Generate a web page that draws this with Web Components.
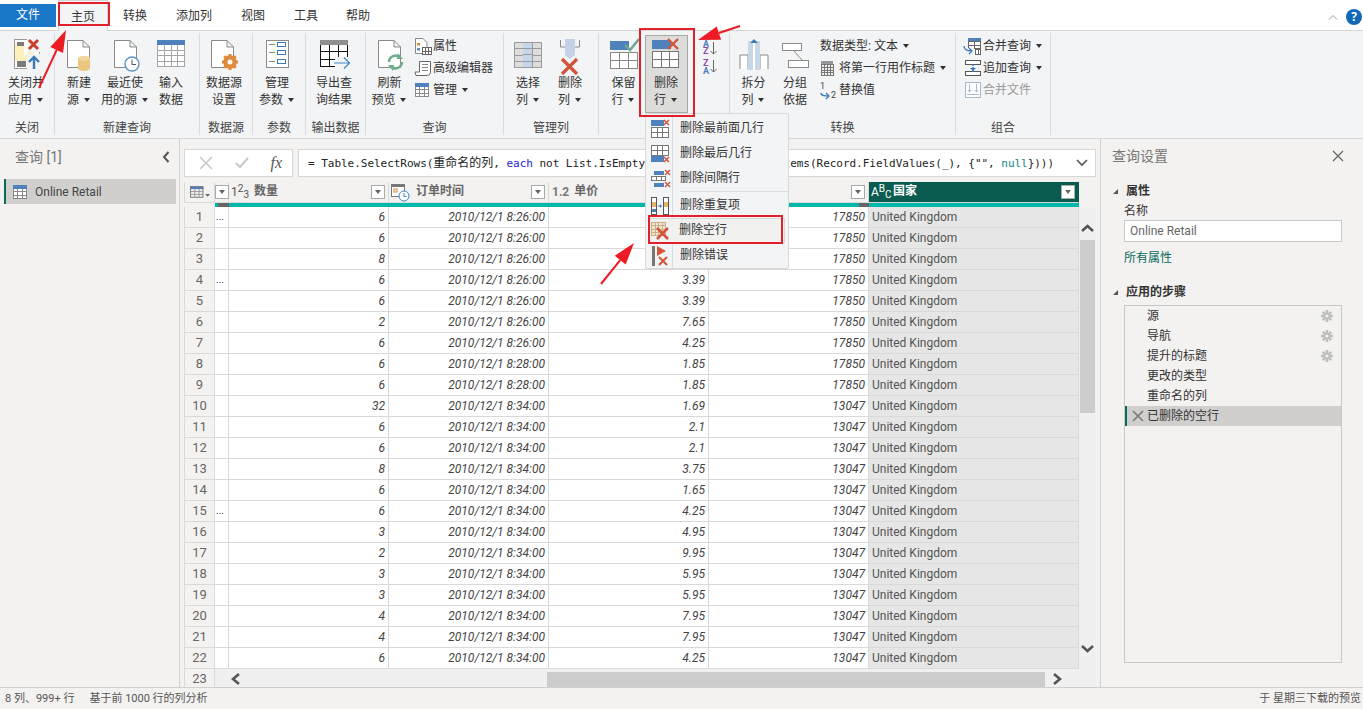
<!DOCTYPE html>
<html lang="zh-CN">
<head>
<meta charset="UTF-8">
<title>Power Query</title>
<style>
    html,body{margin:0;height:100%;overflow:hidden;}
    body{
        width:1363px;height:709px;position:relative;display:flex;flex-direction:column;
        font:12px/17px Roboto,"Noto Sans CJK SC",sans-serif;color:#333;background:#f3f2f1;
    }
</style>
</head>
<body>
<pq-tabs></pq-tabs>
<pq-ribbon>
    <rb-group label="关闭" w="55">
        <rb-btn icon="close" w="52">关闭并<br>应用 <pq-caret></pq-caret></rb-btn>
    </rb-group>
    <rb-group label="新建查询" w="145" pad="3">
        <rb-btn icon="newsrc" w="42">新建<br>源 <pq-caret></pq-caret></rb-btn>
        <rb-btn icon="recent" w="50">最近使<br>用的源 <pq-caret></pq-caret></rb-btn>
        <rb-btn icon="input" w="42">输入<br>数据</rb-btn>
    </rb-group>
    <rb-group label="数据源" w="53">
        <rb-btn icon="dsset" w="48">数据源<br>设置</rb-btn>
    </rb-group>
    <rb-group label="参数" w="53">
        <rb-btn icon="param" w="48">管理<br>参数 <pq-caret></pq-caret></rb-btn>
    </rb-group>
    <rb-group label="输出数据" w="60">
        <rb-btn icon="export" w="56">导出查<br>询结果</rb-btn>
    </rb-group>
    <rb-group label="查询" w="138" pad="2">
        <rb-btn icon="refresh" w="43">刷新<br>预览 <pq-caret></pq-caret></rb-btn>
        <rb-col>
            <rb-small icon="props">属性</rb-small>
            <rb-small icon="adv">高级编辑器</rb-small>
            <rb-small icon="manage">管理 <pq-caret></pq-caret></rb-small>
        </rb-col>
    </rb-group>
    <rb-group label="管理列" w="95" pad="4">
        <rb-btn icon="selcol" w="40">选择<br>列 <pq-caret></pq-caret></rb-btn>
        <rb-btn icon="delcol" w="44">删除<br>列 <pq-caret></pq-caret></rb-btn>
    </rb-group>
    <rb-group label="减少行" w="131" pad="3">
        <rb-btn icon="keep" w="43">保留<br>行 <pq-caret></pq-caret></rb-btn>
        <rb-btn icon="delrow" w="43" active>删除<br>行 <pq-caret></pq-caret></rb-btn>
        <rb-sort></rb-sort>
    </rb-group>
    <rb-group label="转换" w="226" pad="3">
        <rb-btn icon="split" w="41">拆分<br>列 <pq-caret></pq-caret></rb-btn>
        <rb-btn icon="group" w="42">分组<br>依据</rb-btn>
        <rb-col style="margin-left:4px">
            <rb-small>数据类型: 文本 <pq-caret></pq-caret></rb-small>
            <rb-small icon="header">将第一行用作标题 <pq-caret></pq-caret></rb-small>
            <rb-small icon="replace">替换值</rb-small>
        </rb-col>
    </rb-group>
    <rb-group label="组合" w="95" pad="5">
        <rb-col>
            <rb-small icon="merge">合并查询 <pq-caret></pq-caret></rb-small>
            <rb-small icon="append">追加查询 <pq-caret></pq-caret></rb-small>
            <rb-small icon="files" dim>合并文件</rb-small>
        </rb-col>
    </rb-group>
</pq-ribbon>
<pq-main>
    <pq-queries></pq-queries>
    <pq-center>
        <pq-formula></pq-formula>
        <pq-grid></pq-grid>
    </pq-center>
    <pq-settings></pq-settings>
</pq-main>
<pq-status></pq-status>
<pq-menu></pq-menu>
<pq-annotate></pq-annotate>

<script>
    const GRID_LINE = '#d9d9d9';

    const T = (x,y,size,fill,s,extra='') => `<text x="${x}" y="${y}" font-size="${size}" fill="${fill}" font-family="Roboto" ${extra}>${s}</text>`;
    // page outline with folded corner, used by several ribbon icons
    const PAGE = (x,y,w,h) => `<path d="M${x+.5} ${y+.5}H${x+w-7}L${x+w-.5} ${y+7}V${y+h-.5}H${x+.5}Z M${x+w-7} ${y+.5}V${y+7}H${x+w-.5}" fill="#fff" stroke="#8a8a8a"/>`;
    const TABLE = (x,y,w,h,cols,rows,stroke='#8a8a8a',fill='#fff') => {
        let d = '';
        for(let i=1;i<cols;i++){ const px=Math.round(x+w*i/cols)+.5; d+=`M${px} ${y}V${y+h}`; }
        for(let i=1;i<rows;i++){ const py=Math.round(y+h*i/rows)+.5; d+=`M${x} ${py}H${x+w}`; }
        return `<rect x="${x+.5}" y="${y+.5}" width="${w}" height="${h}" fill="${fill}" stroke="${stroke}"/><path d="${d}" stroke="${stroke}" fill="none"/>`;
    };
    const X = (x,y,s,w=2.4,c='#d2553b') => `<path d="M${x} ${y}L${x+s} ${y+s}M${x+s} ${y}L${x} ${y+s}" stroke="${c}" stroke-width="${w}" fill="none"/>`;

    const ICONS = {
        close:[34,34,`<rect x="5.5" y="1.5" width="25" height="29" fill="#fff" stroke="#9a9a9a"/>
            <path d="M15 5V18L25 10V23H6V5Z" fill="#fdf0bd"/><rect x="8" y="4" width="7" height="4" fill="#7b7b7b"/><rect x="8" y="23" width="9" height="6" fill="#7b7b7b"/>
            <rect x="18" y="0" width="16" height="14" fill="#f3f4f5"/>${X(20,2,9,3,'#c8402c')}
            <rect x="18" y="16" width="16" height="16" fill="#f3f4f5"/><path d="M25 31V19M20 24L25 19L30 24" stroke="#3d7ab5" stroke-width="2.4" fill="none"/>`],
        newsrc:[32,34,`${PAGE(4,2,23,28)}<path d="M15 21c0-4 12-4 12 0V30c0 4-12 4-12 0Z" fill="#ecc57e"/><ellipse cx="21" cy="20.5" rx="6" ry="2.5" fill="#f3d79f"/>`],
        recent:[32,34,`${PAGE(5,2,23,28)}<circle cx="23" cy="26" r="7" fill="#fff" stroke="#5f93c6" stroke-width="1.4"/><path d="M23 21.5V26.5H27" stroke="#555" fill="none"/>`],
        input:[30,34,`${TABLE(1,6,27,22,4,4,'#a5a5a5')}<rect x="1" y="2" width="28" height="5" fill="#4f81bd"/>`],
        dsset:[32,34,`${PAGE(3,2,23,28)}<g transform="translate(22,24)"><circle r="5" fill="none" stroke="#e08a3c" stroke-width="3.6"/><path d="M0-8V8M-8 0H8M-5.7-5.7L5.7 5.7M-5.7 5.7L5.7-5.7" stroke="#e08a3c" stroke-width="3"/><circle r="2.5" fill="#fff"/></g>`],
        param:[30,34,`<rect x="4.5" y="2.5" width="22" height="27" fill="#fff" stroke="#8a8a8a"/>
            <path d="M7 6.5H13M7 14.5H13M7 23.5H13" stroke="#8a8a8a"/><rect x="15.5" y="4.5" width="8" height="4" fill="#fff" stroke="#3d7ab5"/><rect x="15.5" y="12.5" width="8" height="4" fill="#fff" stroke="#3d7ab5"/><rect x="15.5" y="21.5" width="8" height="4" fill="#fff" stroke="#3d7ab5"/>`],
        export:[34,34,`${TABLE(3,6,27,22,3,3,'#111')}<rect x="3" y="2" width="28" height="5" fill="#8f8f8f"/><rect x="18" y="19" width="16" height="11" fill="#f3f4f5"/><path d="M17 25H32M27 19.5L32.5 25L27 30.5" stroke="#3d87c8" stroke-width="1.2" fill="none"/>`],
        refresh:[32,34,`${PAGE(4,2,23,28)}<g fill="none" stroke="#6fad8e" stroke-width="2.6"><path d="M15 24a6.5 6.5 0 0 1 11-4.5"/><path d="M28 24a6.5 6.5 0 0 1-11 4.5"/></g><path d="M24 15L29 21H23ZM19 33L14 27H20Z" fill="#6fad8e"/>`],
        selcol:[30,34,`${TABLE(1,4,27,25,3,4,'#9a9a9a','#dddddd')}<rect x="10" y="5" width="9" height="24" fill="#c5d5ea"/><path d="M10 10.5H19M10 16.5H19M10 23.5H19" stroke="#9a9a9a"/>`],
        delcol:[26,34,`<path d="M3.5 2V9H9M22.5 2V9H17" stroke="#8a8a8a" fill="none"/><path d="M8 1H18V17L13 21L8 17Z" fill="#c3d3e5"/>${X(5,21,15,3.2)}`],
        keep:[30,34,`<rect x="1" y="3" width="19" height="9" fill="#4f81bd"/><path d="M16 7L21 12L30 1" stroke="#6fa992" stroke-width="2.6" fill="none"/>${TABLE(1,14,27,16,3,2,'#8a8a8a')}`],
        delrow:[30,34,`<rect x="1" y="3" width="19" height="9" fill="#4f81bd"/>${X(17,2,10,2.4)}${TABLE(1,14,26,16,3,2,'#777')}`],
        split:[30,34,`<path d="M1 31V17H9V31M21 31V17H29V31" fill="#fff" stroke="#8a8a8a" stroke-linejoin="miter"/><rect x="9" y="3" width="12" height="29" fill="#c6d7e8"/><rect x="14" y="3" width="2" height="29" fill="#fff"/><path d="M11 5L15 1L19 5Z" fill="#3d7ab5"/>`],
        group:[30,34,`<rect x="2.5" y="5.5" width="19" height="7" fill="#fff" stroke="#8a8a8a"/><rect x="8.5" y="22.5" width="20" height="7" fill="#fff" stroke="#8a8a8a"/><path d="M14 13L22 22" stroke="#8a8a8a"/>`],
        props:[18,18,`<path d="M1.5 1.5H9L13 5.5V16.5H1.5Z" fill="#fff" stroke="#888"/><rect x="3" y="6" width="3" height="2.5" fill="#d08a3c"/><rect x="3" y="11" width="3" height="2.5" fill="#5b8ec0"/>${TABLE(8,10,9,7,3,2,'#666')}`],
        adv:[18,18,`<path d="M5.5 2.5H16.5V13C16.5 16 14 16.5 11 16.5H2L1 13H5.5Z" fill="#fff" stroke="#666"/><path d="M8 5.5H14M8 8.5H14M8 11.5H14" stroke="#888"/>`],
        manage:[16,16,`${TABLE(1,4,13,10,3,3,'#8a8a8a')}<rect x="1" y="1" width="14" height="4" fill="#4f81bd"/>`],
        header:[14,16,`<rect x="1" y="1" width="12" height="14" fill="#999"/>${TABLE(1,4,12,11,4,4,'#777','#eee')}`],
        replace:[18,18,`${T(0,8,9,'#444','1')}${T(11,17,9,'#444','2')}<path d="M1 12C1 15 5 15 9 15M6 12L9 15L6 18" stroke="#3d7ab5" fill="none" stroke-width="1.3"/>`],
        merge:[18,18,`${TABLE(4,1,12,10,2,3,'#666')}<rect x="4" y="1" width="13" height="3" fill="#4f81bd"/><rect x="1" y="11" width="9" height="6" fill="#f3f4f5"/><path d="M0 9C0 13 3 14 8 14M5 11L8 14L5 17" stroke="#3d7ab5" fill="none" stroke-width="1.3"/>${TABLE(11,12,5,5,2,1,'#666')}`],
        append:[18,18,`<rect x="1.5" y="1.5" width="15" height="4" fill="#fff" stroke="#555"/><rect x="1.5" y="12.5" width="15" height="4" fill="#fff" stroke="#555"/><path d="M9 5V13" stroke="#3d7ab5" stroke-width="1.4" stroke-dasharray="2 1"/><path d="M6 9L9 12L12 9Z" fill="#3d7ab5"/>`],
        files:[18,18,`<rect x="1.5" y="1.5" width="15" height="15" fill="#fff" stroke="#a7b9cb"/><path d="M5.5 3V11M12.5 3V11M3 13.5H15" stroke="#a7b9cb"/><path d="M3.5 9L5.5 11.5L7.5 9ZM10.5 9L12.5 11.5L14.5 9Z" fill="#a7b9cb"/>`],
        top:[20,20,`<rect x="1" y="1" width="13" height="6" fill="#4f81bd"/>${X(14,1,5,1.5)}${TABLE(1,8,17,10,3,2,'#777')}`],
        last:[20,20,`${TABLE(1,1,17,10,3,2,'#777')}<rect x="1" y="12" width="13" height="6" fill="#4f81bd"/>${X(14,13,5,1.5)}`],
        alt:[20,20,`<rect x="4" y="2" width="10" height="4" fill="#4f81bd"/>${X(15,1,5,1.4)}<rect x="1.5" y="7.5" width="14" height="4" fill="#fff" stroke="#777"/><path d="M6.5 7.5V11.5M11.5 7.5V11.5" stroke="#777"/><rect x="4" y="14" width="10" height="4" fill="#4f81bd"/>${X(15,13,5,1.4)}`],
        dupe:[20,20,`<rect x="1.5" y="1.5" width="5" height="17" fill="#fff" stroke="#555"/><rect x="2" y="6" width="4" height="5" fill="#e4b56c"/><rect x="2" y="13" width="4" height="3" fill="#4f81bd"/><rect x="13.5" y="1.5" width="5" height="17" fill="#fff" stroke="#555"/><rect x="14" y="6" width="4" height="5" fill="#e4b56c"/><path d="M8 10H12M10.5 8.5V11.5" stroke="#3d7ab5"/>`],
        blank:[20,20,`${TABLE(1,1,14,13,4,4,'#c9b08c','#f3e4cd')}${X(7,7,11,2.6)}`],
        err:[20,22,`<rect x="2" y="1" width="3" height="20" fill="#777"/><path d="M7 1L16 6L7 11Z" fill="#d2553b"/>${X(9,12,8,2)}`]
    };
    const icon = name => {
        const [w,h,body] = ICONS[name];
        return `<svg width="${w}" height="${h}" viewBox="0 0 ${w} ${h}" style="display:block;flex:none;overflow:visible">${body}</svg>`;
    };

    class Base extends HTMLElement{
        constructor(){
            super();
            this.attachShadow({mode:'open'});
        }
        connectedCallback(){
            this.shadowRoot.innerHTML = this.render();
        }
    }

    class PqCaret extends Base{
        render(){
            return `<style>:host{display:inline-block;width:7px;height:4px;margin-left:2px;vertical-align:2px}
                i{display:block;width:0;height:0;border:3.5px solid transparent;border-top:4px solid #333;border-bottom:0}</style><i></i>`;
        }
    }
    customElements.define('pq-caret',PqCaret);

    class PqTabs extends Base{
        render(){
            const tabs = [['转换',54],['添加列',64],['视图',54],['工具',52],['帮助',52]];
            return `<style>
                :host{display:flex;height:30px;background:#fff;border-bottom:1px solid #d6d6d6;flex:none;box-sizing:content-box;position:relative}
                div{display:flex;align-items:center;justify-content:center;height:30px;box-sizing:border-box;padding-top:3px}
                .file{width:56px;height:23px;margin-top:4px;background:#1a76c6;color:#fff;padding:0;margin-right:2px}
                .on{width:50px;height:31px;background:#f3f4f5;border:1px solid #d6d6d6;border-bottom:0;padding-top:3px;position:relative}
                .right{position:absolute;right:1px;top:9px;display:flex;gap:8px;align-items:center;padding:0;height:auto}
                .help{width:16px;height:16px;border-radius:50%;background:#1168b8;color:#fff;font:bold 12px/16px "Noto Sans";padding:0;display:block;text-align:center}
            </style>
            <div class="file">文件</div><div class="on">主页</div>
            ${tabs.map(t=>`<div style="width:${t[1]}px">${t[0]}</div>`).join('')}
            <div class="right"><svg width="10" height="6" viewBox="0 0 10 6"><path d="M1 5.5L5 1.5L9 5.5" stroke="#999" fill="none"/></svg><div class="help">?</div></div>`;
        }
    }
    customElements.define('pq-tabs',PqTabs);

    class PqRibbon extends Base{
        render(){
            return `<style>:host{display:flex;flex:none;background:#f3f4f5;border-bottom:1px solid #d6d6d6;padding-top:2px;box-sizing:border-box;height:108px}</style><slot></slot>`;
        }
    }
    customElements.define('pq-ribbon',PqRibbon);

    class RbGroup extends Base{
        render(){
            return `<style>
                :host{display:flex;flex-direction:column;box-sizing:border-box;height:102px;border-right:1px solid #dcdcdc;width:${this.getAttribute('w')}px;flex:none}
                .body{flex:1;display:flex;padding-left:${this.getAttribute('pad')||0}px;min-height:0}
                .lbl{text-align:center;height:16px;line-height:18px;color:#444}
            </style><div class="body"><slot></slot></div><div class="lbl">${this.getAttribute('label')}</div>`;
        }
    }
    customElements.define('rb-group',RbGroup);

    class RbBtn extends Base{
        render(){
            const active = this.hasAttribute('active');
            return `<style>
                :host{display:block;flex:none;width:${this.getAttribute('w')}px;box-sizing:border-box;text-align:center;white-space:nowrap;
                    ${active?'background:#dcdcda;border:1px solid #a8a8a8;height:78px;margin-top:2px;padding-right:1px;':''}}
                .ic{height:${active?39:42}px;padding-top:${active?1:5}px;box-sizing:border-box;display:flex;justify-content:center}
            </style><div class="ic">${icon(this.getAttribute('icon'))}</div><slot></slot>`;
        }
    }
    customElements.define('rb-btn',RbBtn);

    class RbCol extends Base{
        render(){
            return `<style>:host{display:flex;flex-direction:column;padding-top:2px;margin-left:3px}</style><slot></slot>`;
        }
    }
    customElements.define('rb-col',RbCol);

    class RbSmall extends Base{
        render(){
            const name = this.getAttribute('icon');
            return `<style>:host{display:flex;align-items:center;gap:1px;height:22px;white-space:nowrap;${this.hasAttribute('dim')?'color:#999;':''}}
                .sl{width:18px;flex:none}</style>
                ${name?`<span class="sl">${icon(name)}</span>`:''}<span><slot></slot></span>`;
        }
    }
    customElements.define('rb-small',RbSmall);

    class RbSort extends Base{
        render(){
            const col = (a,b,y1,y2,c1,c2) => `<svg width="18" height="18" viewBox="0 0 18 18" style="display:block;overflow:visible">
                <text x="1" y="${y1}" font-size="9" font-weight="bold" font-family="Roboto" fill="${c1}">${a}</text>
                <text x="1" y="${y2}" font-size="9" font-weight="bold" font-family="Roboto" fill="${c2}">${b}</text>
                <path d="M11.5 2V14M8.5 11L11.5 14L14.5 11" stroke="#666" fill="none"/></svg>`;
            return `<style>:host{display:flex;flex-direction:column;padding:7px 0 0 14px}</style>
                ${col('A','Z',7,13.5,'#4f81bd','#8e44ad')}${col('Z','A',8,16,'#8e44ad','#4f81bd')}`;
        }
    }
    customElements.define('rb-sort',RbSort);

    class PqMain extends Base{
        render(){
            return `<style>:host{display:flex;flex:1;min-height:0}</style><slot></slot>`;
        }
    }
    customElements.define('pq-main',PqMain);

    class PqQueries extends Base{
        render(){
            return `<style>
                :host{display:block;flex:none;width:180px;box-sizing:border-box;border-right:1px solid #d0d0d0;background:#f3f2f1}
                .head{display:flex;justify-content:space-between;align-items:center;height:36px;padding:0 9px 0 15px;font-size:14px;color:#777}
                .item{display:flex;align-items:center;margin:4px 3px 0 4px;height:25px;background:#d0cfcd;border-left:2px solid #0b6a5c;color:#444}
                .item svg{margin:0 7px 0 6px}
                .item span{padding-top:1px}
            </style>
            <div class="head"><span>查询 [1]</span><svg width="8" height="12" viewBox="0 0 8 12"><path d="M6.5 1L2 6L6.5 11" stroke="#555" stroke-width="2" fill="none"/></svg></div>
            <div class="item">${icon('manage')}<span>Online Retail</span></div>`;
        }
    }
    customElements.define('pq-queries',PqQueries);

    class PqCenter extends Base{
        render(){
            return `<style>:host{display:flex;flex-direction:column;gap:5px;flex:none;width:920px;box-sizing:border-box;padding:10px 4px 0;min-height:0}</style><slot></slot>`;
        }
    }
    customElements.define('pq-center',PqCenter);

    class PqFormula extends Base{
        render(){
            const kw = s=>`<b>${s}</b>`;
            return `<style>
                :host{display:flex;gap:5px;height:28px;flex:none}
                .btns,.expr{background:#fff;border:1px solid #d6d6d6;box-sizing:border-box;height:28px;display:flex;align-items:center}
                .btns{width:109px;flex:none;justify-content:space-between;padding:0 10px 0 13px}
                .fx{font:italic 16px "Liberation Serif",serif;color:#555}
                .expr{flex:1;min-width:0;overflow:hidden;padding-left:9px;font:11px/26px "DejaVu Sans Mono","Noto Sans CJK SC",monospace;letter-spacing:-.025px;color:#222;white-space:pre;justify-content:space-between;padding-right:7px}
                b{font-weight:normal;color:#1a1ae0}
                i{font-style:normal;color:#098a8a}
                u{text-decoration:none;font-size:12px}
            </style>
            <div class="btns">
                <svg width="16" height="16" viewBox="0 0 16 16"><path d="M2 2L14 14M14 2L2 14" stroke="#c8c8c8" stroke-width="1.6"/></svg>
                <svg width="16" height="12" viewBox="0 0 16 12"><path d="M2 6L6 10L14 1" stroke="#c8c8c8" stroke-width="2" fill="none"/></svg>
                <span class="fx">fx</span>
            </div>
            <div class="expr"><span>= Table.SelectRows(<u>重命名的列</u>, ${kw('each')} not List.IsEmpty(List.RemoveMatchingItems(Record.FieldValues(_), {"", <i>null</i>})))</span>
                <svg width="12" height="8" viewBox="0 0 12 8"><path d="M1 1L6 6L11 1" stroke="#555" stroke-width="1.6" fill="none"/></svg></div>`;
        }
    }
    customElements.define('pq-formula',PqFormula);

    class PqGrid extends Base{
        render(){
            const qty = [6,6,8,6,6,2,6,6,6,32,6,6,8,6,6,3,2,3,3,4,4,6];
            // first three prices lie under the open menu
            const price = ['','','','3.39','3.39','7.65','4.25','1.85','1.85','1.69','2.1','2.1','3.75','1.65','4.25','4.95','9.95','5.95','5.95','7.95','7.95','4.25'];
            const dots = {1:1,4:1,15:1};
            const filt = `<span class="filt"></span>`;
            const head = `
                <div class="h rn"><svg width="22" height="14" viewBox="0 0 22 14"><rect x="0" y="1" width="14" height="3" fill="#4f81bd"/><rect x=".5" y="1.5" width="13" height="11" fill="none" stroke="#777"/><path d="M.5 6.5H14M.5 9.5H14M5 4V13M9.5 4V13" stroke="#999"/><path d="M16 9L21 9L18.5 12Z" fill="#666"/></svg></div>
                <div class="h nar">${filt}</div>
                <div class="h"><span class="ty">1<sup>2</sup><sub>3</sub></span><span class="nm">数量</span>${filt}</div>
                <div class="h"><svg class="tyi" width="20" height="18" viewBox="0 0 20 18"><rect x=".5" y=".5" width="13" height="12" fill="#fff" stroke="#777"/><rect x="0" y="0" width="14" height="3" fill="#777"/><rect x="3" y="5" width="3" height="3" fill="none" stroke="#d08a3c"/><circle cx="13" cy="12" r="5" fill="#fff" stroke="#3d87c8"/><path d="M13 9V12.5H15.5" stroke="#3d87c8" fill="none"/></svg><span class="nm tm">订单时间</span>${filt}</div>
                <div class="h"><span class="ty d">1.2</span><span class="nm tm">单价</span>${filt}</div>
                <div class="h"><span class="nm"></span>${filt}</div>
                <div class="h sel"><span class="ty w">A<sup>B</sup><sub>C</sub></span><span class="nm">国家</span>${filt}</div>
                <div class="q q0"></div><div class="q g1"></div><div class="q"></div><div class="q"></div><div class="q"></div><div class="q g2"></div><div class="q"></div>`;
            let rows = '';
            qty.forEach((q,i)=>{
                const n = i+1;
                const time = n<=7?'8:26:00':(n<=9?'8:28:00':'8:34:00');
                rows += `<div class="c rn">${n}</div><div class="c dots">${dots[n]?'...':''}</div><div class="c r">${q}</div>
                    <div class="c r">2010/12/1 ${time}</div><div class="c r">${price[i]}</div><div class="c r">${n<=9?17850:13047}</div><div class="c s">United Kingdom</div>`;
            });
            return `<style>
                :host{display:block;flex:1;min-height:0;overflow:hidden}
                .top{display:flex}
                .tbl{display:grid;grid-template-columns:31px 14px 160px 160px 160px 160px 210px;grid-auto-rows:21px;grid-template-rows:21px 4px;width:895px;flex:none}
                .h{box-sizing:border-box;display:flex;align-items:center;background:#f3f2f1;border-right:1px solid #d9d9d9;border-bottom:1px solid #d9d9d9;padding:0 3px 1px 2px;color:#666;font-weight:700;position:relative}
                .h.rn{padding-left:5px;border-left:1px solid #d9d9d9}
                .h.nar{padding:0;justify-content:center}
                .h.sel{background:#0b5c50;color:#fff;border-right-color:#0b5c50}
                .nm{flex:1;margin-left:6px;font-size:12px;white-space:nowrap}
                .nm.tm{margin-left:5px}
                .ty{font-size:12px;font-weight:400;color:#555;display:inline-flex;align-items:center;width:17px;height:18px;line-height:18px;flex:none}
                .ty.w{color:#fff;width:16px}
                .ty.d{width:auto;font-weight:700;color:#777;font-size:12px;margin-left:1px}
                sup,sub{font-size:10px;line-height:0;position:relative;vertical-align:baseline}
                sup{top:-3px}
                sub{top:3px}
                .tyi{margin-top:2px}
                .filt{flex:none;width:14px;height:14px;box-sizing:border-box;background:#fff;border:1px solid #aaa;display:flex;align-items:center;justify-content:center}
                .filt::after{content:"";border:3px solid transparent;border-top:4px solid #666;border-bottom:0}
                .q{background:#01b8aa}
                .q0{background:#f3f2f1}
                .g1{background:linear-gradient(90deg,#01b8aa 3px,#666 3px)}
                .g2{background:linear-gradient(90deg,#01b8aa 150px,#666 150px)}
                .c{box-sizing:border-box;background:#fff;border-right:1px solid ${GRID_LINE};border-bottom:1px solid ${GRID_LINE};padding:0 3px;line-height:20px;color:#444;white-space:nowrap;overflow:hidden}
                .c.rn{background:#f3f2f1;text-align:center;color:#666;border-left:1px solid #d9d9d9;font-size:13px;padding:0}
                .r{text-align:right;font-style:italic}
                .dots{padding:0 0 0 1px;line-height:20px;font-size:10px;color:#335}
                .s{background:#e6e6e6 !important;color:#555}
                .vs{flex:none;width:17px;background:#f0f0f0;margin-top:25px;position:relative;display:flex;flex-direction:column;align-items:center;height:462px;box-sizing:border-box}
                .vs .up{margin-top:17px}
                .vs .th{width:15px;height:173px;background:#cdcdcd;margin-top:8px}
                .vs .dn{margin-top:auto;margin-bottom:16px}
                .bot{display:flex;height:18px}
                .bot .c.rn{width:31px;line-height:20px;height:18px;border-bottom:0}
                .hs{flex:1;background:#f0f0f0;display:flex;align-items:center;margin-right:-2px;padding-top:2px;box-sizing:border-box}
                .hs .l{margin-left:16px}
                .hs .t{width:498px;height:15px;background:#cdcdcd;margin-left:307px}
                .hs .rr{margin-left:8px}
            </style>
            <div class="top"><div class="tbl">${head}${rows}</div>
                <div class="vs">
                    <svg class="up" width="13" height="8" viewBox="0 0 13 8"><path d="M1 7L6.5 2L12 7" stroke="#555" stroke-width="2.6" fill="none"/></svg>
                    <div class="th"></div>
                    <svg class="dn" width="13" height="8" viewBox="0 0 13 8"><path d="M1 1L6.5 6L12 1" stroke="#555" stroke-width="2.6" fill="none"/></svg>
                </div>
            </div>
            <div class="bot"><div class="c rn">23</div>
                <div class="hs">
                    <svg class="l" width="9" height="12" viewBox="0 0 9 12"><path d="M8 1L2 6L8 11" stroke="#555" stroke-width="2.6" fill="none"/></svg>
                    <div class="t"></div>
                    <svg class="rr" width="9" height="12" viewBox="0 0 9 12"><path d="M1 1L7 6L1 11" stroke="#555" stroke-width="2.6" fill="none"/></svg>
                </div>
            </div>`;
        }
    }
    customElements.define('pq-grid',PqGrid);

    class PqSettings extends Base{
        render(){
            const gear = `<svg width="12" height="12" viewBox="0 0 12 12"><path d="M6 0V12M0 6H12M1.8 1.8L10.2 10.2M1.8 10.2L10.2 1.8" stroke="#bdbdbd" stroke-width="2.4"/><circle cx="6" cy="6" r="1.6" fill="#f3f2f1"/></svg>`;
            const steps = [['源',1],['导航',1],['提升的标题',1],['更改的类型',0],['重命名的列',0]];
            const tri = `<svg width="7" height="7" viewBox="0 0 7 7"><path d="M6 1V6H1Z" fill="#555"/></svg>`;
            return `<style>
                :host{display:block;flex:1;border-left:1px solid #d0d0d0;background:#f3f2f1;padding:0 21px 0 11px;box-sizing:border-box;min-width:0}
                .title{display:flex;justify-content:space-between;align-items:center;height:34px;font-size:14px;color:#777;margin-right:-18px;padding-right:16px}
                .sec{display:flex;align-items:center;gap:7px;font-weight:700;height:20px;color:#333}
                .in{margin-left:12px}
                .lab{height:19px;line-height:20px}
                .box{height:22px;border:1px solid #c8c8c8;background:#fff;box-sizing:border-box;line-height:20px;padding-left:5px;color:#666}
                .link{color:#0b6a5c;height:20px;line-height:20px;margin-top:6px}
                .list{height:358px;border:1px solid #c8c8c8;box-sizing:border-box;margin-top:3px}
                .st{display:flex;align-items:center;height:20px;padding:0 8px 0 22px;justify-content:space-between;white-space:nowrap}
                .st.on{background:#d0cfcd;border-left:2px solid #0b6a5c;padding-left:5px;justify-content:flex-start;gap:3px}
            </style>
            <div class="title"><span>查询设置</span><svg width="12" height="12" viewBox="0 0 12 12"><path d="M1 1L11 11M11 1L1 11" stroke="#666" stroke-width="1.3"/></svg></div>
            <div class="sec" style="margin-top:8px">${tri}<span>属性</span></div>
            <div class="in">
                <div class="lab">名称</div>
                <div class="box">Online Retail</div>
                <div class="link">所有属性</div>
            </div>
            <div class="sec" style="margin-top:14px">${tri}<span>应用的步骤</span></div>
            <div class="in"><div class="list">
                ${steps.map(s=>`<div class="st"><span>${s[0]}</span>${s[1]?gear:''}</div>`).join('')}
                <div class="st on"><svg width="12" height="12" viewBox="0 0 12 12"><path d="M1 1L11 11M11 1L1 11" stroke="#777" stroke-width="1.6"/></svg><span>已删除的空行</span></div>
            </div></div>`;
        }
    }
    customElements.define('pq-settings',PqSettings);

    class PqStatus extends Base{
        render(){
            return `<style>
                :host{display:flex;flex:none;height:22px;box-sizing:border-box;border-top:1px solid #d0d0d0;background:#f3f2f1;align-items:center;padding:0 2px 0 5px;color:#555;font-size:11px}
                .a{margin-left:15px}.b{margin-left:auto}
            </style><span>8 列、999+ 行</span><span class="a">基于前 1000 行的列分析</span><span class="b">于 星期三下载的预览</span>`;
        }
    }
    customElements.define('pq-status',PqStatus);

    // dropdown of 删除行, lies over the grid
    class PqMenu extends Base{
        render(){
            const item = (ic,s,cls='') => `<div class="it ${cls}"><span class="ic">${icon(ic)}</span><span>${s}</span></div>`;
            return `<style>
                :host{position:absolute;left:645px;top:113px;width:144px;height:156px;box-sizing:border-box;background:#f3f4f5;border:1px solid #d8d8d8;border-radius:2px;padding-top:2px}
                :host::before{content:"";position:absolute;left:26px;top:0;bottom:0;width:1px;background:#dcdcdc}
                .it{display:flex;align-items:center;height:25px;position:relative}
                .ic{width:27px;display:flex;justify-content:center;margin-right:7px;padding-left:1px;box-sizing:border-box}
                .sep{height:1px;background:#dcdcdc;margin:0 0 1px 34px}
                .hov{background:#f1f1ef;margin:0 3px 0 2px;border:1px solid #d8d8d8;box-sizing:border-box}
                .hov .ic{margin-left:-3px;margin-right:6px}
            </style>
            ${item('top','删除最前面几行')}${item('last','删除最后几行')}${item('alt','删除间隔行')}
            <div class="sep"></div>
            ${item('dupe','删除重复项')}${item('blank','删除空行','hov')}${item('err','删除错误')}`;
        }
    }
    customElements.define('pq-menu',PqMenu);

    // red marks drawn on top of the screenshot
    class PqAnnotate extends Base{
        render(){
            const arrow = (x1,y1,x2,y2) => {
                const a = Math.atan2(y2-y1,x2-x1), len = 22, wid = 7;
                const bx = x2-Math.cos(a)*len, by = y2-Math.sin(a)*len;
                const nx = -Math.sin(a)*wid, ny = Math.cos(a)*wid;
                return `<path d="M${x1} ${y1}L${bx} ${by}" stroke="#ed1c24" stroke-width="2"/><path d="M${x2} ${y2}L${bx+nx} ${by+ny}L${bx-nx} ${by-ny}Z" fill="#ed1c24"/>`;
            };
            const box = (x,y,w,h) => `<rect x="${x}" y="${y}" width="${w}" height="${h}" fill="none" stroke="#e0202a" stroke-width="2"/>`;
            return `<style>:host{position:absolute;left:0;top:0;width:1363px;height:709px;pointer-events:none}svg{display:block}</style>
            <svg width="1363" height="709">
                ${box(59,3,50,22)}${box(640,29,54,87)}${box(649,216,133,27)}
                ${arrow(39,88,66,30)}${arrow(740,26,698,40)}${arrow(601,284,634,243)}
            </svg>`;
        }
    }
    customElements.define('pq-annotate',PqAnnotate);
</script>
</body>
</html>
